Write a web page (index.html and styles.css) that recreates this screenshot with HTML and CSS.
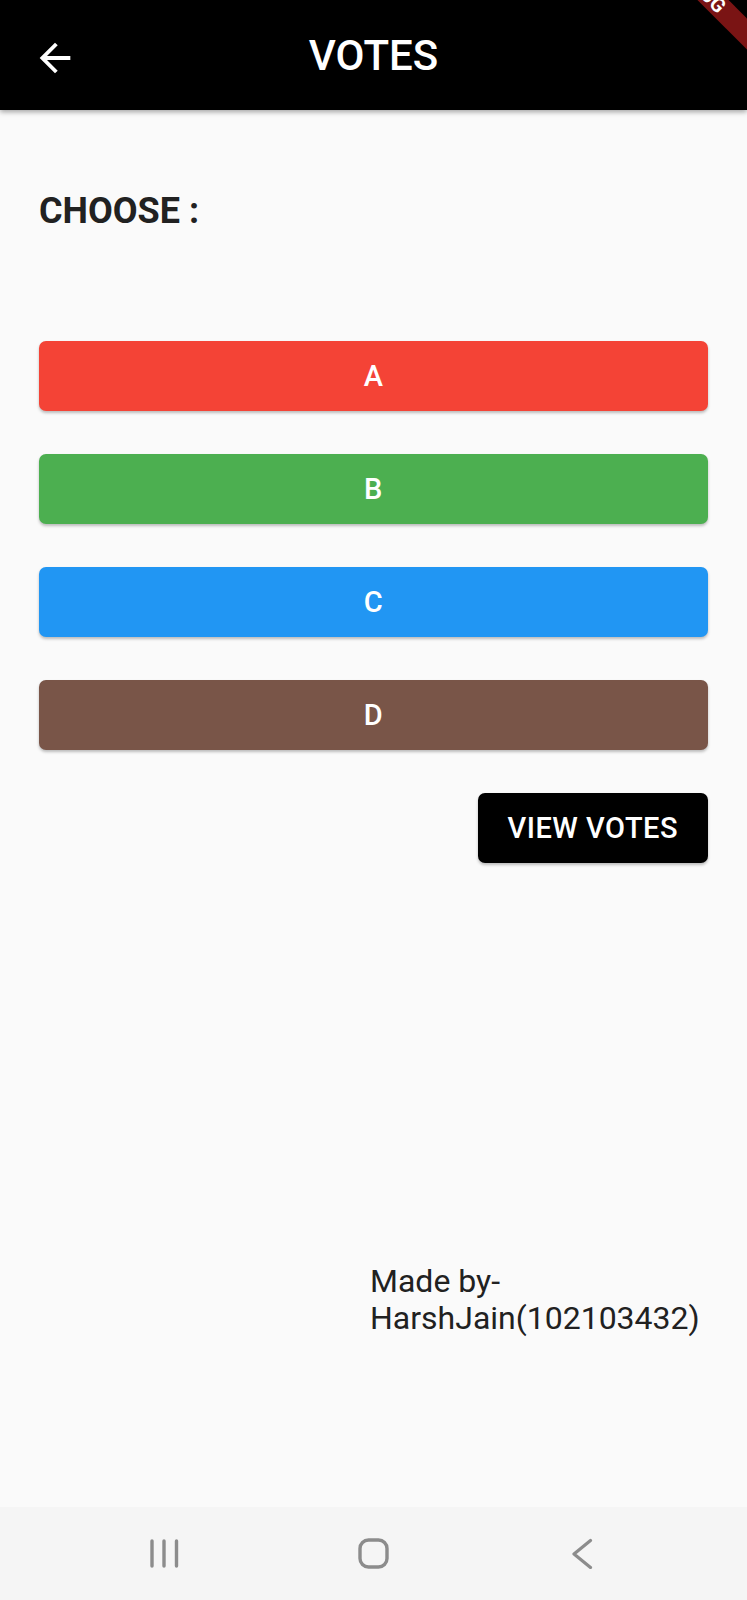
FILE: index.html
```html
<!DOCTYPE html>
<html>
<head>
<meta charset="utf-8">
<link rel="stylesheet" href="styles.css">
</head>
<body>
<div class="screen">
  <header class="appbar">
    <div class="appbar-lead">
      <svg class="back-icon" viewBox="0 0 24 24" width="46" height="46"><path fill="#fff" d="M20 11H7.83l5.59-5.59L12 4l-8 8 8 8 1.41-1.41L7.83 13H20v-2z"/></svg>
    </div>
    <h1 class="appbar-title">VOTES</h1>
    <div class="appbar-trail"></div>
  </header>

  <main class="content">
    <h2 class="choose">CHOOSE :</h2>
    <div class="options">
      <button class="opt opt-red">A</button>
      <button class="opt opt-green">B</button>
      <button class="opt opt-blue">C</button>
      <button class="opt opt-brown">D</button>
      <button class="view-btn">VIEW VOTES</button>
    </div>
    <p class="credit">Made by-<br>HarshJain(102103432)</p>
  </main>

  <nav class="sysnav">
    <svg class="nav-icon" viewBox="0 0 31 31" width="31" height="31"><g stroke="#8c8c8c" stroke-width="3.4" stroke-linecap="round"><line x1="3" y1="3" x2="3" y2="28"/><line x1="15" y1="3" x2="15" y2="28"/><line x1="27.5" y1="3" x2="27.5" y2="28"/></g></svg>
    <svg class="nav-icon" viewBox="0 0 31 31" width="31" height="31"><rect x="2" y="2" width="27" height="27" rx="8.5" fill="none" stroke="#8c8c8c" stroke-width="3.4"/></svg>
    <svg class="nav-icon" viewBox="0 0 31 31" width="31" height="31"><polyline points="23.5,2.5 7,16 23.5,29.5" fill="none" stroke="#8c8c8c" stroke-width="3.2" stroke-linecap="round" stroke-linejoin="round"/></svg>
  </nav>

  <div class="debug-banner">DEBUG</div>
</div>
</body>
</html>
```
FILE: styles.css
```css
* { box-sizing: border-box; }
html, body { margin: 0; padding: 0; }
body {
  font-family: Roboto, "Noto Sans", "Liberation Sans", sans-serif;
  background: #fafafa;
}
.screen {
  width: 747px;
  height: 1600px;
  position: relative;
  overflow: hidden;
  background: #fafafa;
  display: flex;
  flex-direction: column;
}
.appbar {
  height: 110px;
  flex: none;
  background: #000;
  display: grid;
  grid-template-columns: 110px 1fr 110px;
  align-items: center;
  box-shadow: 0 2px 5px rgba(0,0,0,0.35);
  position: relative;
  z-index: 1;
}
.appbar-lead { display: flex; align-items: center; padding-left: 32px; padding-top: 6px; }
.back-icon { display: block; }
.appbar-title {
  margin: 0;
  text-align: center;
  color: #fff;
  font-size: 42px;
  font-weight: 500;
  line-height: 49px;
  padding-top: 1px;
}
.content {
  flex: 1;
  padding: 0 39px;
  display: flex;
  flex-direction: column;
}
.choose {
  margin: 80px 0 0 0;
  font-size: 36px;
  line-height: 42px;
  font-weight: 700;
  color: #212121;
}
.options {
  margin-top: 109px;
  display: flex;
  flex-direction: column;
  gap: 43px;
}
.opt, .view-btn {
  height: 70px;
  border: none;
  border-radius: 7px;
  color: #fff;
  font-family: Roboto, "Noto Sans", "Liberation Sans", sans-serif;
  font-size: 29px;
  font-weight: 500;
  letter-spacing: 0.5px;
  box-shadow: 0 2px 3px rgba(0,0,0,0.25);
  padding: 0;
}
.opt { width: 100%; }
.opt-red { background: #f44336; }
.opt-green { background: #4caf50; }
.opt-blue { background: #2196f3; }
.opt-brown { background: #795548; }
.view-btn {
  align-self: flex-end;
  background: #000;
  padding: 0 30px;
}
.credit {
  margin: 400px 0 0 331px;
  font-size: 32px;
  line-height: 37px;
  color: #212121;
}
.sysnav {
  height: 93px;
  flex: none;
  background: #f5f5f5;
  display: flex;
  justify-content: center;
  align-items: center;
  gap: 178px;
}
.nav-icon { display: block; }
.debug-banner {
  position: absolute;
  left: 600px;
  top: -24px;
  width: 200px;
  height: 22px;
  background: #7a1414;
  color: #fff;
  font-size: 20px;
  font-weight: 700;
  line-height: 22px;
  text-align: center;
  transform: rotate(45deg);
  z-index: 2;
}
```
